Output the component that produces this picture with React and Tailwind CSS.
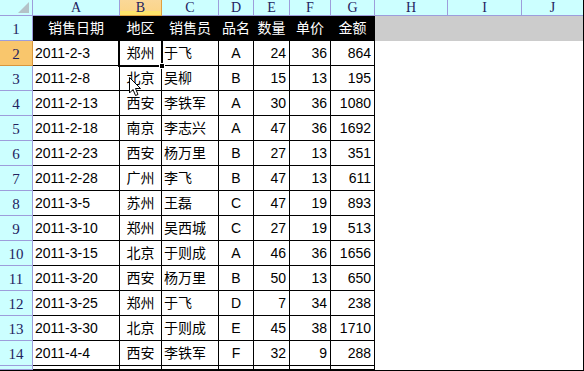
import React from "react";

const rows = [
  ["2011-2-3", "郑州", "于飞", "A", "24", "36", "864"],
  ["2011-2-8", "北京", "吴柳", "B", "15", "13", "195"],
  ["2011-2-13", "西安", "李铁军", "A", "30", "36", "1080"],
  ["2011-2-18", "南京", "李志兴", "A", "47", "36", "1692"],
  ["2011-2-23", "西安", "杨万里", "B", "27", "13", "351"],
  ["2011-2-28", "广州", "李飞", "B", "47", "13", "611"],
  ["2011-3-5", "苏州", "王磊", "C", "47", "19", "893"],
  ["2011-3-10", "郑州", "吴西城", "C", "27", "19", "513"],
  ["2011-3-15", "北京", "于则成", "A", "46", "36", "1656"],
  ["2011-3-20", "西安", "杨万里", "B", "50", "13", "650"],
  ["2011-3-25", "郑州", "于飞", "D", "7", "34", "238"],
  ["2011-3-30", "北京", "于则成", "E", "45", "38", "1710"],
  ["2011-4-4", "西安", "李铁军", "F", "32", "9", "288"],
  ["", "", "", "", "", "", ""],
];

const header = ["销售日期", "地区", "销售员", "品名", "数量", "单价", "金额"];
const letters = ["A", "B", "C", "D", "E", "F", "G", "H", "I", "J"];
const align = [
  "justify-start pl-[2px]",
  "justify-center",
  "justify-start pl-[2px]",
  "justify-center",
  "justify-end pr-[3px]",
  "justify-end pr-[3px]",
  "justify-end pr-[3px]",
];

const serif = "font-['Liberation_Serif','DejaVu_Serif',serif]";
const sans = "font-['Liberation_Sans','Noto_Sans_CJK_SC',sans-serif]";

export default function App() {
  return (
    <div className="relative w-[584px] h-[371px] overflow-hidden bg-white border-r border-b border-black">
      <div className="grid grid-cols-[33px_87px_42px_57px_35px_36px_41px_44px_73px_74px_61px] grid-rows-[16px_repeat(14,25px)_4px]">
        {/* corner */}
        <div className="relative bg-[#ccffff] border-r border-b border-[#9d9ddb]">
          <svg className="absolute right-[3px] bottom-[2px]" width="11" height="11" viewBox="0 0 11 11">
            <polygon points="11,0 11,11 0,11" fill="#b4c3c8" />
          </svg>
        </div>
        {letters.map((l, i) => (
          <div
            key={l}
            className={`${serif} flex items-center justify-center text-[14px] leading-none text-[#23235f] border-b ${
              i === 9 ? "" : "border-r"
            } ${
              i === 1
                ? "bg-[linear-gradient(#fad898_0%,#fbd58a_70%,#ffe56a_75%,#ffe56a_100%)] border-[#e0a040]"
                : "bg-[#ccffff] border-[#9d9ddb]"
            }`}
          >
            {l}
          </div>
        ))}

        {/* row 1 */}
        <div className={`${serif} flex items-end justify-center pb-[3px] text-[15px] leading-none text-[#23235f] bg-[#ccffff] border-r border-b border-[#9d9ddb]`}>
          1
        </div>
        {header.map((h) => (
          <div
            key={h}
            className={`${sans} flex items-center justify-center bg-black text-white text-[14px] leading-none border-r border-b border-black`}
          >
            {h}
          </div>
        ))}
        <div className="col-span-3 bg-[#cccccc]" />

        {rows.map((r, ri) => (
          <React.Fragment key={ri}>
            <div
              className={`${serif} flex items-end justify-center pb-[3px] text-[15px] leading-none text-[#23235f] border-r border-b ${
                ri === 0
                  ? "bg-[#f9c66c] border-[#d8963c]"
                  : "bg-[#ccffff] border-[#9d9ddb]"
              }`}
            >
              {ri === 13 ? "" : ri + 2}
            </div>
            {r.map((c, ci) => (
              <div
                key={ci}
                className={`${sans} flex items-center ${align[ci]} text-[14px] leading-none text-black border-r border-b border-black`}
              >
                {c}
              </div>
            ))}
            <div className="col-span-3" />
          </React.Fragment>
        ))}
      </div>

      {/* active cell B2 */}
      <div className="absolute left-[118px] top-[39px] w-[45px] h-[28px] border-2 border-black pointer-events-none">
        <div className="w-full h-full border border-white" />
      </div>
      <div className="absolute left-[159px] top-[63px] w-[6px] h-[6px] bg-black border border-white" />

      {/* mouse cursor */}
      <svg className="absolute left-[129px] top-[77px]" width="13" height="20" viewBox="0 0 13 20">
        <path
          d="M0.5 0.5 L0.5 16 L4 12.5 L6.5 18.5 L9 17.5 L6.5 11.5 L11.5 11.5 Z"
          fill="white"
          stroke="black"
          strokeWidth="1"
          strokeLinejoin="miter"
        />
      </svg>
    </div>
  );
}
